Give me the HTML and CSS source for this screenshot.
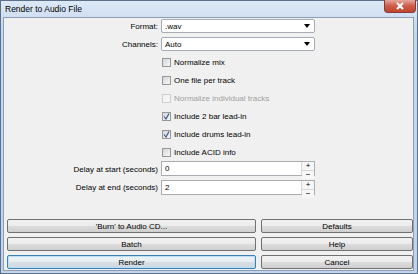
FILE: index.html
```html
<!DOCTYPE html>
<html lang="en">
<head>
    <meta charset="UTF-8">
    <title>Render to Audio File</title>
    <link rel="stylesheet" href="styles.css">
</head>
<body>
    <div class="window">
        <div class="titlebar">
            <span class="title">Render to Audio File</span>
            <div class="close">
                <svg width="10" height="8" viewBox="0 0 10 8"><path d="M2 1 L8 7 M8 1 L2 7" stroke="#fff" stroke-width="2"/></svg>
            </div>
        </div>
        <div class="client">
            <div class="form">
                <label class="lbl">Format:</label>
                <div class="combo"><span>.wav</span><span class="arrow"></span></div>

                <label class="lbl">Channels:</label>
                <div class="combo"><span>Auto</span><span class="arrow"></span></div>

                <span></span>
                <div class="check"><span class="box"></span>Normalize mix</div>

                <span></span>
                <div class="check"><span class="box"></span>One file per track</div>

                <span></span>
                <div class="check disabled"><span class="box"></span>Normalize individual tracks</div>

                <span></span>
                <div class="check"><span class="box checked"><svg width="7" height="7" viewBox="0 0 7 7"><path d="M1 3.5 L3 6 L6 0.5" fill="none" stroke="#3a5a8c" stroke-width="1.2"/></svg></span>Include 2 bar lead-in</div>

                <span></span>
                <div class="check"><span class="box checked"><svg width="7" height="7" viewBox="0 0 7 7"><path d="M1 3.5 L3 6 L6 0.5" fill="none" stroke="#3a5a8c" stroke-width="1.2"/></svg></span>Include drums lead-in</div>

                <span></span>
                <div class="check"><span class="box"></span>Include ACID info</div>

                <label class="lbl">Delay at start (seconds)</label>
                <div class="spin first"><span class="val">0</span><span class="arrows"><span>+</span><span>&minus;</span></span></div>

                <label class="lbl">Delay at end (seconds)</label>
                <div class="spin"><span class="val">2</span><span class="arrows"><span>+</span><span>&minus;</span></span></div>
            </div>

            <div class="buttons">
                <button>'Burn' to Audio CD...</button>
                <button>Defaults</button>
                <button>Batch</button>
                <button>Help</button>
                <button class="default">Render</button>
                <button>Cancel</button>
            </div>
        </div>
    </div>
</body>
</html>
```

FILE: styles.css
```css
body {
    margin: 0;
    padding: 0;
    font-family: "Liberation Sans", Arial, sans-serif;
    font-size: 8px;
    color: #000;
}

.window {
    width: 418px;
    height: 274px;
    box-sizing: border-box;
    border: 1px solid #5d7089;
    padding: 0 3px 2px 2px;
    background: linear-gradient(#dce8f6, #c6d8ee 30px, #c2d4eb);
    display: flex;
    flex-direction: column;
}

.titlebar {
    height: 16px;
    display: flex;
    align-items: center;
    justify-content: space-between;
    position: relative;
}

.title {
    font-size: 8.5px;
    padding-left: 2px;
    margin-top: -1px;
}

.close {
    position: absolute;
    right: -2px;
    top: -1px;
    width: 32px;
    height: 13px;
    border: 1px solid #8a3b34;
    border-top: none;
    border-radius: 0 0 4px 4px;
    background: linear-gradient(#e3a99d, #cd5a48 50%, #c0452f);
    display: flex;
    align-items: center;
    justify-content: center;
    box-sizing: border-box;
}

.client {
    flex: 1;
    background-color: #f0f0f0;
    border: 1px solid #8c9db4;
    display: flex;
    flex-direction: column;
    padding: 1px 1px 1px 0;
}

.form {
    display: grid;
    grid-template-columns: 154px 154px;
    column-gap: 3px;
    row-gap: 4px;
    align-items: center;
}

.lbl {
    text-align: right;
}

.combo {
    height: 14px;
    box-sizing: border-box;
    border: 1px solid #a5acb5;
    background: #fff;
    border-radius: 2px;
    display: flex;
    align-items: center;
    justify-content: space-between;
    padding: 0 4px 0 3px;
}

.arrow {
    width: 0;
    height: 0;
    border-left: 3px solid transparent;
    border-right: 3px solid transparent;
    border-top: 4px solid #000;
}

.check {
    height: 14px;
    display: flex;
    align-items: center;
    padding-left: 1px;
}

.box {
    width: 9px;
    height: 9px;
    box-sizing: border-box;
    border: 1px solid #979797;
    background: linear-gradient(135deg, #d2d5da, #f7f8f9);
    margin-right: 3px;
    display: flex;
    align-items: center;
    justify-content: center;
}

.disabled {
    color: #a0a0a0;
}

.disabled .box {
    border-color: #cdcdcd;
    background: #f4f4f4;
}

.spin {
    height: 15px;
    box-sizing: border-box;
    border: 1px solid #abadb3;
    background: #fff;
    display: flex;
    align-items: center;
    justify-content: space-between;
}

.spin.first {
    margin-top: -2px;
}

.val {
    padding-left: 3px;
}

.arrows {
    width: 12px;
    height: 13px;
    display: flex;
    flex-direction: column;
    border-left: 1px solid #d8d8d8;
}

.arrows span {
    flex: 1;
    display: flex;
    align-items: center;
    justify-content: center;
    font-size: 8px;
    line-height: 1;
    background: #f6f6f6;
}

.arrows span + span {
    border-top: 1px solid #d8d8d8;
}

.buttons {
    margin-top: auto;
    display: grid;
    grid-template-columns: 249px 152px;
    column-gap: 5px;
    row-gap: 4px;
    padding-left: 3px;
}

button {
    height: 14px;
    font-family: inherit;
    font-size: 8px;
    padding: 0;
    color: #000;
    border: 1px solid #707070;
    border-radius: 2px;
    background: linear-gradient(#f2f2f2, #ebebeb 50%, #dddddd 50%, #cfcfcf);
}

button.default {
    border-color: #3c7fb1;
    box-shadow: inset 0 0 0 1px #b9e0f5;
    background: linear-gradient(#eef3f6, #e6ecf0 50%, #d8e0e6 50%, #cfd8df);
}
```
